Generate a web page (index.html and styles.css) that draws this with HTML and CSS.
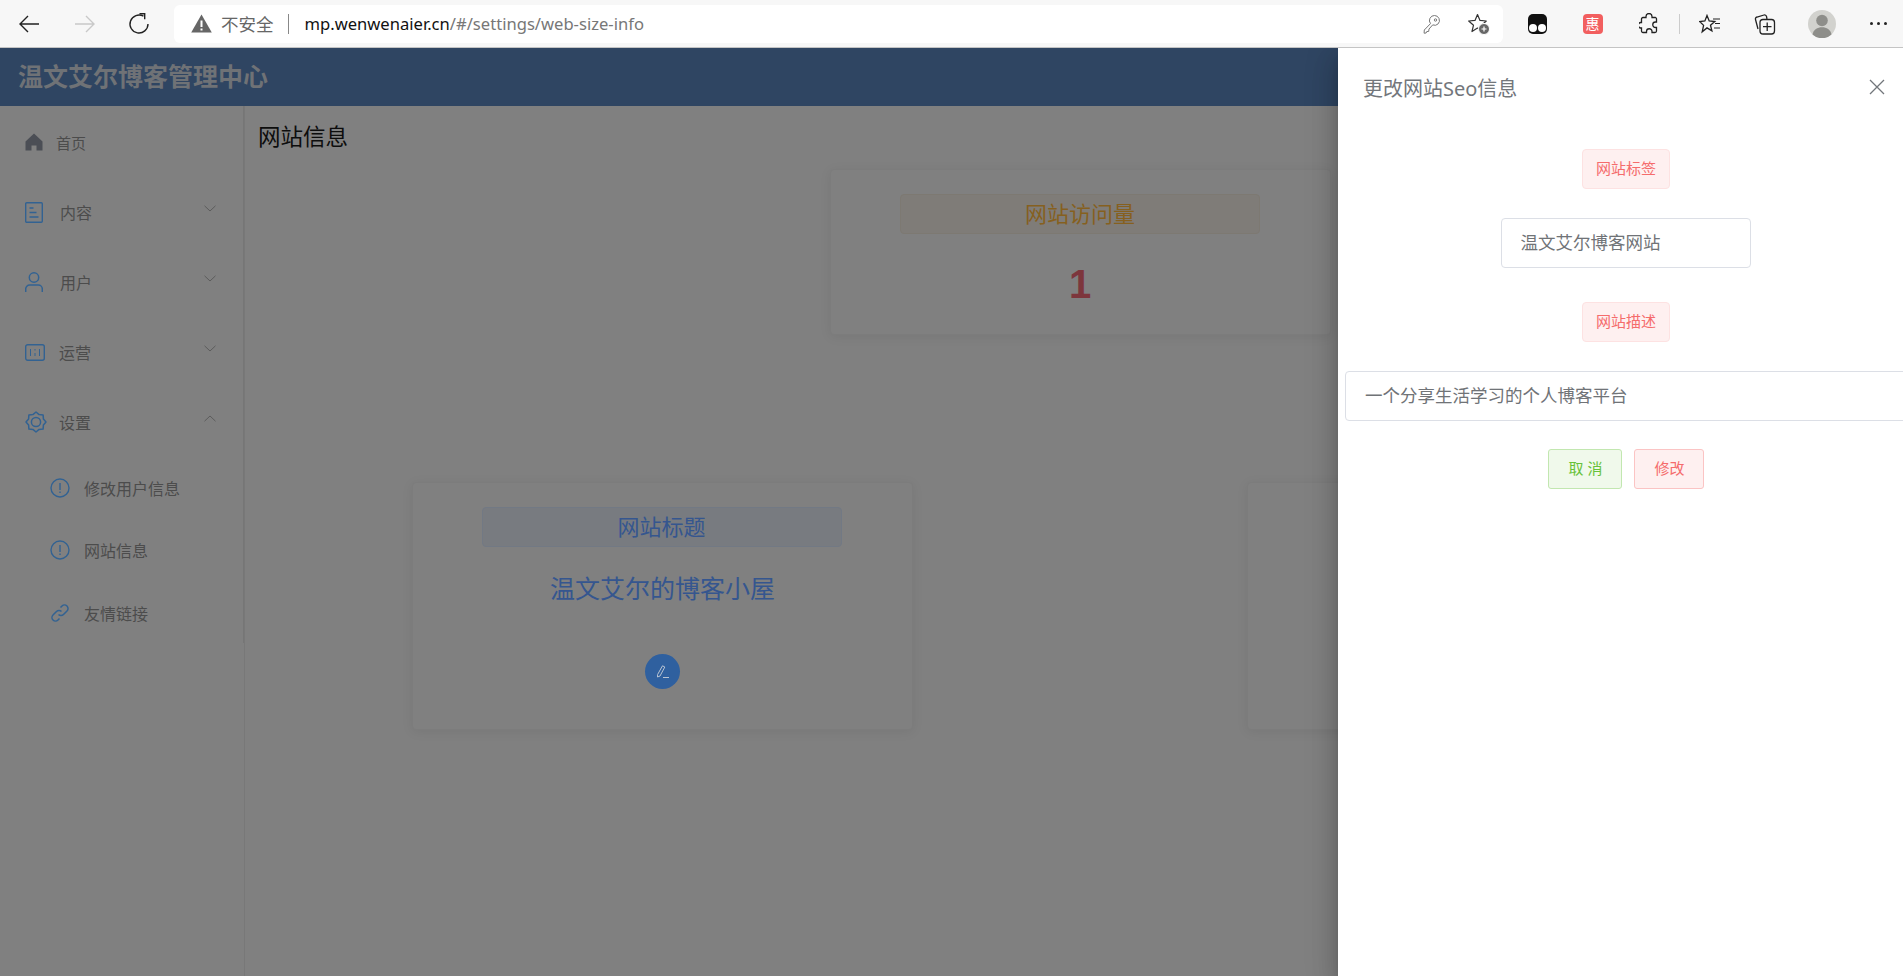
FILE: index.html
```html
<!DOCTYPE html>
<html>
<head>
    <meta charset="UTF-8">
    <title>温文艾尔博客管理中心</title>
    <link rel="stylesheet" href="styles.css">
</head>
<body>
    <svg class="defs" width="0" height="0">
        <symbol id="chevron" viewBox="0 0 12 7"><path d="M.5 .8 6 6 11.5 .8" fill="none" stroke="currentColor"/></symbol>
        <symbol id="info" viewBox="0 0 20 20"><circle cx="10" cy="10" r="9" fill="none" stroke="currentColor" stroke-width="1.4"/><path d="M10 5v7M10 13.6v1.4" stroke="currentColor" stroke-width="1.4"/></symbol>
    </svg>

    <div class="toolbar">
        <div class="nav-btn">
            <svg width="22" height="20" viewBox="0 0 22 20"><path d="M21 10H2M10 2 2 10l8 8" fill="none" stroke="#222" stroke-width="1.4"/></svg>
        </div>
        <div class="nav-btn">
            <svg width="22" height="20" viewBox="0 0 22 20"><path d="M1 10h19M12 2l8 8-8 8" fill="none" stroke="#c9c9c9" stroke-width="1.4"/></svg>
        </div>
        <div class="nav-btn">
            <svg width="22" height="22" viewBox="0 0 22 22"><path d="M15.5 3.2A9 9 0 1 0 20 11" fill="none" stroke="#222" stroke-width="1.4"/><path d="M11.5 .8h5.2v5.4" fill="none" stroke="#222" stroke-width="1.4"/></svg>
        </div>
        <div class="address">
            <svg class="warn" width="21" height="19" viewBox="0 0 21 19"><path d="M10.5 .5 20.8 18.6H.2z" fill="#666"/><path d="M10.5 6.5v6.5M10.5 14.4v2" stroke="#fff" stroke-width="2"/></svg>
            <span class="insecure">不安全</span>
            <span class="addr-sep"></span>
            <span class="url"><b>mp.wenwenaier.cn</b>/#/settings/web-size-info</span>
            <svg class="key" width="18" height="20" viewBox="0 0 18 20"><path d="M11.5 1.5a5 5 0 0 1 3.6 8.4 5 5 0 0 1-5.4 1L6 15l-.3 2.400-2 .2-.6 1.400-2 .2.2-3.200 6.200-6.400a5 5 0 0 1 4-8.100z" fill="none" stroke="#777" stroke-width="1"/><circle cx="12.500" cy="6" r="1.200" fill="none" stroke="#777"/></svg>
            <svg class="fav-add" width="22" height="22" viewBox="0 0 22 22"><path d="M9.500 1.500 12 7.400l6.300.6-4.800 4.200 1.500 6.300-5.500-3.400-5.500 3.400 1.500-6.300L.7 8l6.300-.6z" fill="none" stroke="#333" stroke-width="1.200" stroke-linejoin="round"/><circle cx="16" cy="16" r="5.500" fill="#666" stroke="#fff"/><path d="M13.500 16h5M16 13.500v5" stroke="#fff" stroke-width="1.200"/></svg>
        </div>
        <div class="ext-btn">
            <div class="tamper"><i></i><i></i></div>
        </div>
        <div class="ext-btn"><div class="hui">惠</div></div>
        <div class="ext-btn">
            <svg class="nudge-right" width="20" height="22" viewBox="0 0 20 22"><path d="M7 4.500V3.500a3 3 0 0 1 6 0v1h3.500a1.500 1.500 0 0 1 1 1.500v3h-1a2.500 2.500 0 0 0 0 5.500h1v3.500a1.500 1.500 0 0 1-1.500 1.500h-3v-1a2.500 2.500 0 0 0-5.500 0v1H4a1.500 1.500 0 0 1-1.500-1.500v-3h-1a2.800 2.800 0 0 1 0-5.500h1V6A1.500 1.500 0 0 1 4 4.500z" fill="none" stroke="#222" stroke-width="1.300"/></svg>
        </div>
        <span class="tool-sep"></span>
        <div class="ext-btn">
            <svg class="nudge-left" width="22" height="20" viewBox="0 0 22 20"><path d="M8 1.500 10.200 7l5.600.5-4.300 3.700 1.400 5.600L8 13.900l-4.800 3.900 1.400-6.400L.6 7.500 5.900 7z" fill="none" stroke="#222" stroke-width="1.300"/><path d="M14 5h7M16 9.500h5M15 14h6" stroke="#222" stroke-width="1.200"/></svg>
        </div>
        <div class="ext-btn">
            <svg class="nudge-left" width="22" height="22" viewBox="0 0 22 22"><path d="M4 16 1.500 6.500A2 2 0 0 1 3 4l7-2a2 2 0 0 1 2.500 1.500L13 6" fill="none" stroke="#222" stroke-width="1.300"/><rect x="6" y="6.500" width="14.500" height="14.500" rx="3" fill="#f7f7f7" stroke="#222" stroke-width="1.300"/><path d="M13.200 9.500v8.500M9 13.700h8.500" stroke="#222" stroke-width="1.300"/></svg>
        </div>
        <div class="ext-btn">
            <svg class="nudge-right" width="28" height="28" viewBox="0 0 28 28"><circle cx="14" cy="14" r="14" fill="#d2d2ce"/><circle cx="14" cy="10.500" r="5.800" fill="#8e8e8a"/><path d="M4.500 24.500c1-5 5-7.200 9.500-7.200s8.500 2.200 9.500 7.200a14 14 0 0 1-19 0z" fill="#8e8e8a"/></svg>
        </div>
        <div class="ext-btn dots"><i></i><i></i><i></i></div>
    </div>

    <div class="page">
        <div class="header">温文艾尔博客管理中心</div>
        <div class="body-row">
            <div class="sidebar">
                <div class="menu-item home">
                    <svg class="menu-icon" width="18" height="18" viewBox="0 0 18 18"><path d="M9 .5 17.500 8.500V17.500H11.500V12.500H6.500V17.500H.5V8.500z" fill="#4b4e55"/></svg>
                    <span>首页</span>
                </div>
                <div class="menu-item">
                    <svg class="menu-icon roomy" width="18" height="21" viewBox="0 0 18 21"><rect x=".7" y=".7" width="16.600" height="19.600" rx="1" fill="none" stroke="currentColor" stroke-width="1.400"/><path d="M4.500 6h4M4.500 10.500h7M4.500 15h9" stroke="currentColor" stroke-width="1.300"/></svg>
                    <span>内容</span>
                    <svg class="chevron" width="12" height="7"><use href="#chevron"/></svg>
                </div>
                <div class="menu-item">
                    <svg class="menu-icon roomy" width="18" height="20" viewBox="0 0 18 20"><circle cx="9" cy="5.500" r="4.700" fill="none" stroke="currentColor" stroke-width="1.500"/><path d="M.7 20v-3a4 4 0 0 1 4-4h8.600a4 4 0 0 1 4 4v3" fill="none" stroke="currentColor" stroke-width="1.500"/></svg>
                    <span>用户</span>
                    <svg class="chevron" width="12" height="7"><use href="#chevron"/></svg>
                </div>
                <div class="menu-item">
                    <svg class="menu-icon" width="20" height="17" viewBox="0 0 20 17"><rect x=".7" y=".7" width="18.600" height="15.600" rx="2" fill="none" stroke="currentColor" stroke-width="1.400"/><path d="M5.500 5v7M10 5v1.500M10 9v3M14.500 5v7" stroke="currentColor"/></svg>
                    <span>运营</span>
                    <svg class="chevron" width="12" height="7"><use href="#chevron"/></svg>
                </div>
                <div class="menu-item">
                    <svg class="menu-icon gear" width="24" height="24" viewBox="0 0 24 24"><path d="M22 12 19.400 15.100 19.100 19.100 15.100 19.400 12 22 8.900 19.400 4.900 19.100 4.600 15.100 2 12 4.600 8.900 4.900 4.900 8.900 4.600 12 2 15.100 4.600 19.100 4.900 19.400 8.900z" fill="none" stroke="currentColor" stroke-width="1.500" stroke-linejoin="round"/><circle cx="12" cy="12" r="4.600" fill="none" stroke="currentColor" stroke-width="1.500"/></svg>
                    <span>设置</span>
                    <svg class="chevron up" width="12" height="7"><use href="#chevron"/></svg>
                </div>
                <div class="sub-item">
                    <svg class="menu-icon" width="20" height="20"><use href="#info"/></svg>
                    <span>修改用户信息</span>
                </div>
                <div class="sub-item">
                    <svg class="menu-icon" width="20" height="20"><use href="#info"/></svg>
                    <span>网站信息</span>
                </div>
                <div class="sub-item last">
                    <svg class="menu-icon" width="20" height="20" viewBox="0 0 20 20"><path d="M8.500 11.500a3.500 3.500 0 0 0 5 0l3.500-3.500a3.500 3.500 0 0 0-5-5L10.500 4.500M11.500 8.500a3.500 3.500 0 0 0-5 0L3 12a3.500 3.500 0 0 0 5 5l1.500-1.500" fill="none" stroke="currentColor" stroke-width="1.500"/></svg>
                    <span>友情链接</span>
                </div>
            </div>
            <div class="main">
                <h2 class="page-title">网站信息</h2>
                <div class="card-row first">
                    <div class="card">
                        <div class="card-tag warning">网站访问量</div>
                        <div class="visits">1</div>
                    </div>
                </div>
                <div class="card-row">
                    <div class="card tall">
                        <div class="card-tag primary">网站标题</div>
                        <div class="card-value">温文艾尔的博客小屋</div>
                        <div class="edit-btn">
                            <svg width="14" height="14" viewBox="0 0 14 14"><path d="M6.500 .8 8.800 2 4 11 1.500 12 1.600 9.500z" fill="none" stroke="#b9c4d3"/><path d="M7 12.500h6" stroke="#b9c4d3"/></svg>
                        </div>
                    </div>
                    <div class="card tall"></div>
                </div>
            </div>
        </div>

        <div class="drawer">
            <div class="drawer-head">
                <span>更改网站Seo信息</span>
                <svg width="16" height="16" viewBox="0 0 16 16"><path d="M1 1l14 14M15 1 1 15" stroke="#72767b" stroke-width="1.300"/></svg>
            </div>
            <div class="drawer-body">
                <div class="tag">网站标签</div>
                <div class="field">温文艾尔博客网站</div>
                <div class="tag">网站描述</div>
                <div class="field wide">一个分享生活学习的个人博客平台</div>
                <div class="actions">
                    <div class="btn ok">取 消</div>
                    <div class="btn danger">修改</div>
                </div>
            </div>
        </div>
    </div>
</body>
</html>
```

FILE: styles.css
```css
* {
    box-sizing: border-box;
}
html, body {
    margin: 0;
    height: 100%;
    overflow: hidden;
}
body {
    font-family: "Noto Sans", "Noto Sans CJK SC", sans-serif;
    background-color: #808080;
}
.defs {
    position: absolute;
}
.toolbar {
    display: flex;
    align-items: center;
    height: 48px;
    background-color: #f7f7f7;
    border-bottom: 1px solid #c4c4c4;
    padding-left: 1px;
}
.nav-btn {
    width: 56px;
    height: 47px;
    flex-shrink: 0;
    display: flex;
    align-items: center;
    justify-content: center;
}
.nav-btn:nth-child(3) {
    width: 52px;
}
.address {
    width: 1329px;
    height: 38px;
    margin-left: 9px;
    background-color: white;
    border-radius: 6px;
    display: flex;
    align-items: center;
    padding-left: 17px;
    flex-shrink: 0;
}
.insecure {
    font-size: 17.500px;
    color: #666;
    margin-left: 9px;
}
.addr-sep {
    width: 1px;
    height: 20px;
    background-color: #888;
    margin: 0 16px 0 14px;
}
.url {
    font-size: 16.600px;
    color: #777;
}
.url b {
    font-weight: normal;
    color: #111;
}
.key {
    margin-left: auto;
}
.fav-add {
    margin: 0 13px 0 27px;
}
.ext-btn {
    width: 55px;
    height: 47px;
    flex-shrink: 0;
    display: flex;
    align-items: center;
    justify-content: center;
}
.address + .ext-btn {
    margin-left: 7px;
}
.nudge-right {
    margin-left: 2px;
}
.nudge-left {
    margin-right: 2px;
}
.tamper {
    width: 19px;
    height: 20px;
    background-color: #111;
    border-radius: 5px;
    display: flex;
    align-items: flex-end;
    justify-content: center;
    gap: 1px;
    padding-bottom: 2px;
}
.tamper i {
    width: 8px;
    height: 8px;
    background-color: white;
    border-radius: 50%;
}
.hui {
    width: 20px;
    height: 20px;
    background-color: #f25f5f;
    border-radius: 4px;
    color: white;
    font-size: 14px;
    line-height: 20px;
    text-align: center;
}
.tool-sep {
    width: 1px;
    height: 20px;
    background-color: #ccc;
    margin: 0 3px 0 4px;
    flex-shrink: 0;
}
.dots {
    gap: 4px;
    margin-left: 2px;
    width: 56px;
}
.dots i {
    width: 3px;
    height: 3px;
    background-color: #222;
    border-radius: 50%;
}
.page {
    position: relative;
    height: 928px;
    overflow: hidden;
}
.header {
    height: 58px;
    background-color: #2f4562;
    color: #6f7276;
    font-size: 25px;
    font-weight: bold;
    line-height: 56px;
    padding-left: 18px;
}
.body-row {
    display: flex;
    height: 870px;
}
.sidebar {
    width: 245px;
    height: 537px;
    flex-shrink: 0;
    padding-top: 1px;
    border-right: 2px solid #767676;
    color: #4c4c4c;
}
.menu-item {
    display: flex;
    align-items: center;
    height: 70px;
    padding-left: 25px;
    font-size: 16px;
}
.menu-item.home {
    font-size: 15px;
}
.menu-icon {
    color: #326292;
    flex-shrink: 0;
}
.menu-item .menu-icon {
    margin-right: 14px;
}
.menu-item.home .menu-icon {
    margin-right: 13px;
}
.menu-item .menu-icon.roomy {
    margin-right: 17px;
}
.menu-item .menu-icon.gear {
    margin-left: -1px;
    margin-right: 11px;
}
.chevron {
    margin-left: auto;
    margin-right: 27px;
    margin-bottom: 8px;
    color: #5c5c5c;
}
.chevron.up {
    transform: rotate(180deg);
}
.sub-item {
    display: flex;
    align-items: center;
    height: 62px;
    padding-left: 50px;
    font-size: 16px;
}
.sub-item.last {
    height: 64px;
}
.sub-item .menu-icon {
    margin-right: 14px;
}
.main {
    flex: 1;
    padding: 0 1px 0 13px;
    border-left: 1px solid #787878;
    margin-left: -1px;
}
.page-title {
    margin: 0;
    height: 63px;
    font-size: 22.500px;
    font-weight: normal;
    line-height: 62px;
    color: #0d0d0d;
}
.card-row {
    display: flex;
    justify-content: center;
    gap: 334px;
}
.card-row.first {
    margin-bottom: 147px;
}
.card {
    width: 501px;
    height: 166px;
    padding-top: 24px;
    display: flex;
    flex-direction: column;
    align-items: center;
    background-color: #808080;
    border: 1px solid #7c7c7c;
    border-radius: 4px;
    box-shadow: 0 2px 12px rgba(0, 0, 0, 0.07);
}
.card.tall {
    height: 248px;
}
.card-tag {
    width: 360px;
    height: 40px;
    border: 1px solid;
    border-radius: 4px;
    font-size: 22px;
    line-height: 36px;
    text-align: center;
    flex-shrink: 0;
}
.card-tag.primary {
    margin-right: 2px;
    background-color: #787b80;
    border-color: #727984;
    color: #35568f;
}
.card-tag.warning {
    background-color: #7f7c78;
    border-color: #7d7972;
    color: #86601f;
}
.visits {
    margin-top: 21px;
    font-family: "Liberation Sans", sans-serif;
    font-size: 40px;
    font-weight: bold;
    line-height: 58px;
    color: #7d363c;
}
.card-value {
    margin-top: 20px;
    font-size: 25px;
    line-height: 42px;
    color: #35568f;
}
.edit-btn {
    width: 35px;
    height: 35px;
    margin-top: 45px;
    background-color: #2f609f;
    border-radius: 50%;
    display: flex;
    align-items: center;
    justify-content: center;
}
.drawer {
    position: absolute;
    top: 0;
    right: 0;
    bottom: 0;
    width: 565px;
    background-color: white;
    box-shadow: 0 8px 10px -5px rgba(0, 0, 0, 0.2), 0 16px 24px 2px rgba(0, 0, 0, 0.14), 0 6px 30px 5px rgba(0, 0, 0, 0.12);
}
.drawer-head {
    display: flex;
    align-items: center;
    justify-content: space-between;
    height: 80px;
    padding: 0 18px 2px 25px;
    font-size: 20px;
    color: #72767b;
}
.drawer-body {
    display: flex;
    flex-direction: column;
    align-items: center;
    padding: 21px 0 0 0;
    width: 575px;
}
.tag {
    width: 88px;
    height: 40px;
    padding-left: 1px;
    background-color: #fef0f0;
    border: 1px solid #fde2e2;
    border-radius: 4px;
    color: #f56c6c;
    font-size: 15px;
    line-height: 37px;
    text-align: center;
    flex-shrink: 0;
}
.field {
    width: 250px;
    height: 50px;
    margin: 29px 0 34px;
    padding-left: 19px;
    background-color: white;
    border: 1px solid #dcdfe6;
    border-radius: 4px;
    font-size: 17.500px;
    line-height: 46px;
    color: #707377;
    flex-shrink: 0;
}
.field.wide {
    width: 600px;
    margin: 29px 0 28px 7px;
    align-self: flex-start;
}
.actions {
    display: flex;
    gap: 12px;
}
.btn {
    height: 40px;
    padding-left: 20px;
    border-radius: 3px;
    border: 1px solid;
    font-size: 15px;
    line-height: 37px;
    white-space: nowrap;
}
.btn.ok {
    width: 74px;
    background-color: #f0f9eb;
    border-color: #c2e7b0;
    color: #67c23a;
}
.btn.danger {
    width: 70px;
    background-color: #fef0f0;
    border-color: #fbc4c4;
    color: #f56c6c;
}
```
